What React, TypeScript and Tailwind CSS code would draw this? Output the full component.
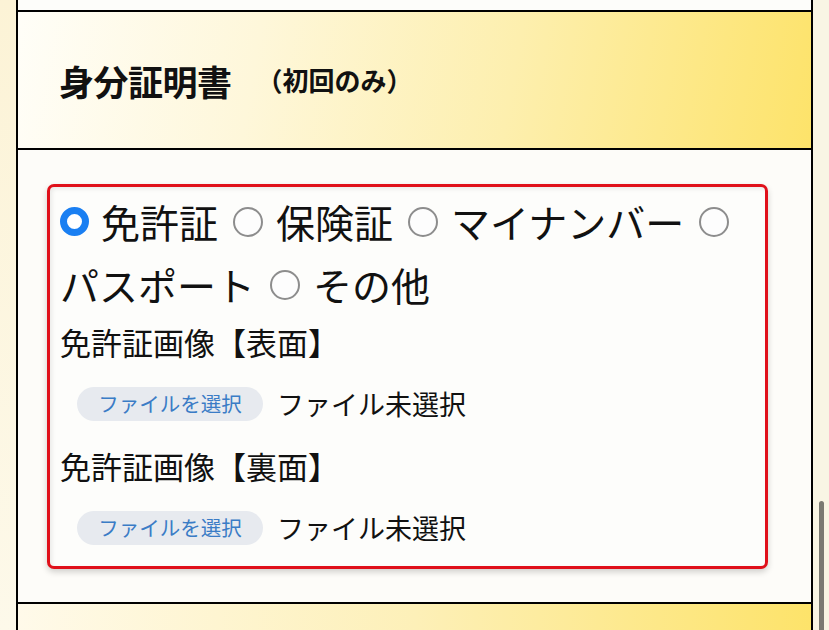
import React from "react";

const Radio = ({ checked, first }: { checked?: boolean; first?: boolean }) => (
  <div className={`flex h-[63px] items-center ${first ? "mr-[12px]" : "ml-[15px] mr-[13px]"}`}>
    {checked ? (
      <div className="h-[29px] w-[29px] rounded-full border-[7px] border-[#1a7ff2] bg-white" />
    ) : (
      <div className="h-[30px] w-[30px] rounded-full border-[2.5px] border-[#8d8d8d] bg-[#fdfdfd]" />
    )}
  </div>
);

const Txt = ({ children }: { children: React.ReactNode }) => (
  <div className="flex h-[63px] items-center text-[39px] leading-none text-[#111]">{children}</div>
);

const FileRow = () => (
  <div className="flex h-[73px] items-center pl-[17px]">
    <div className="flex h-[34px] w-[186px] items-center justify-center rounded-full bg-[#e7eaef] text-[20.5px] leading-none text-[#3a7cc6]">
      ファイルを選択
    </div>
    <div className="ml-[14px] text-[27px] leading-none text-[#111]">ファイル未選択</div>
  </div>
);

export default function App() {
  return (
    <div className="relative h-[630px] w-[829px] overflow-hidden bg-[#fbf6e2] font-['Noto_Sans_CJK_JP','Noto_Sans',sans-serif]">
      <div className="flex h-full">
        <div className="w-[16px] shrink-0 bg-gradient-to-b from-[#fcf3d6] to-[#fdf9ea]" />
        <div className="flex w-[797px] shrink-0 flex-col border-x-2 border-black">
          <div className="h-[12px] shrink-0 border-b-2 border-black bg-[#fdfdfa]" />
          <div className="flex h-[138px] shrink-0 items-center border-b-2 border-black bg-[linear-gradient(100deg,#fffef8_0%,#fef7da_30%,#fdefae_62%,#fde36a_100%)] pl-[41px]">
            <span className="text-[35px] font-bold leading-none tracking-[-0.5px] text-[#111]">身分証明書</span>
            <span className="ml-[25px] text-[26px] font-bold leading-none text-[#111]">（初回のみ）</span>
          </div>
          <div className="shrink-0 border-b-2 border-black bg-[#fdfcf9] pb-[33px] pl-[29px] pr-[43px] pt-[34px]">
            <div className="rounded-[7px] border-[3px] border-[#e0101a] bg-[#fdfdfb] pb-[2px] pl-[10px] pt-[3px] shadow-[0_3px_6px_rgba(0,0,0,0.18),inset_2px_2px_4px_rgba(0,0,0,0.08)]">
              <div className="flex flex-wrap">
                <Radio checked first />
                <Txt>免許証</Txt>
                <Radio />
                <Txt>保険証</Txt>
                <Radio />
                <Txt>マイナンバー</Txt>
                <Radio />
                <Txt>パスポート</Txt>
                <Radio />
                <Txt>その他</Txt>
              </div>
              <div className="flex h-[51px] items-center text-[31px] leading-none text-[#111]">免許証画像【表面】</div>
              <FileRow />
              <div className="flex h-[51px] items-center text-[31px] leading-none text-[#111]">免許証画像【裏面】</div>
              <FileRow />
            </div>
          </div>
          <div className="flex-1 bg-[linear-gradient(90deg,#fffaea_0%,#fdf0b8_50%,#fde36a_100%)]" />
        </div>
        <div className="flex-1 bg-[#f9f5e4]" />
      </div>
      <div className="absolute left-[819px] top-[501px] h-[140px] w-[5px] rounded-full bg-[#7b7a72]" />
    </div>
  );
}
